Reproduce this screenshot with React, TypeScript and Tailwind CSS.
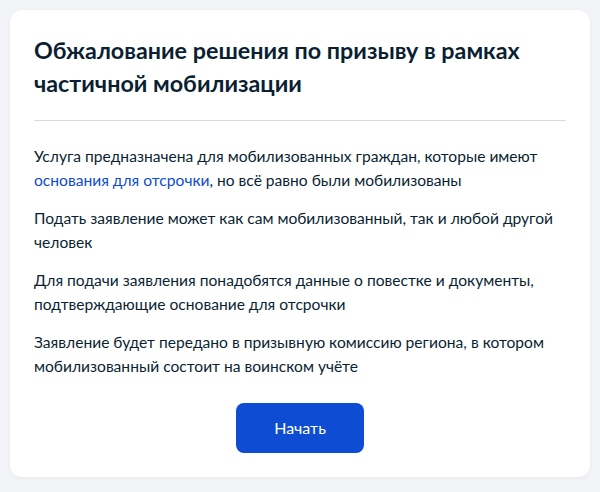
import React from "react";

export default function App() {
  return (
    <div
      className="w-[600px] h-[492px] bg-[#f2f4f8] pt-[10px] px-[10px] overflow-hidden"
      style={{ fontFamily: "Lato, 'Noto Sans', sans-serif" }}
    >
      <div className="w-[580px] bg-white rounded-[12px] shadow-[0_1px_4px_rgba(11,31,51,0.06)] px-6 pt-6 pb-6 text-[#0b1f33]">
        <h1 className="text-[23.3px] leading-[33px] font-bold">
          Обжалование решения по призыву в рамках частичной мобилизации
        </h1>
        <div className="mt-[20px] h-px bg-[#d7dbe0]" />
        <div className="mt-[23px] text-[15.6px] leading-[24px]">
          <p>
            Услуга предназначена для мобилизованных граждан, которые имеют{" "}
            <span className="text-[#0d4cd3]">основания для отсрочки</span>, но всё равно были мобилизованы
          </p>
          <p className="mt-[14px]">
            Подать заявление может как сам мобилизованный, так и любой другой человек
          </p>
          <p className="mt-[14px]">
            Для подачи заявления понадобятся данные о повестке и документы, подтверждающие основание для отсрочки
          </p>
          <p className="mt-[14px]">
            Заявление будет передано в призывную комиссию региона, в котором мобилизованный состоит на воинском учёте
          </p>
        </div>
        <div className="mt-[25px] flex justify-center">
          <button className="w-[128px] h-[50px] rounded-[8px] bg-[#0d4cd3] text-white text-[16px]">
            Начать
          </button>
        </div>
      </div>
    </div>
  );
}
